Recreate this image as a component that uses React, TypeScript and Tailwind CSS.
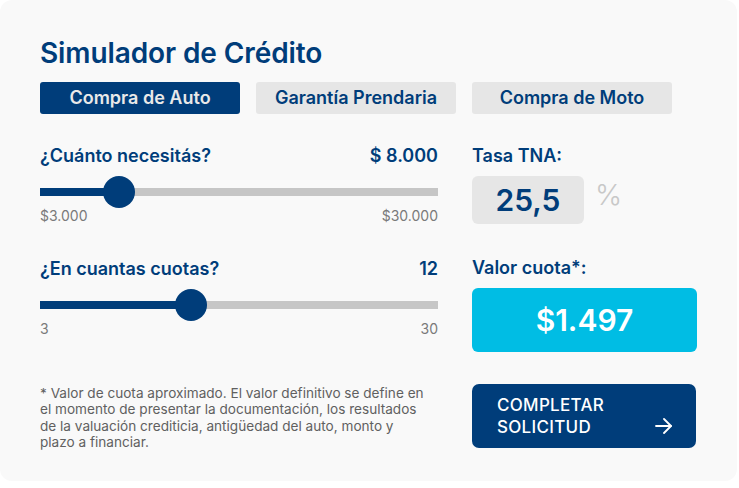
import React from "react";

function Slider({ pos, min, max }: { pos: number; min: string; max: string }) {
  return (
    <div>
      <div className="relative mt-2 flex h-8 items-center">
        <div className="flex h-2 w-full bg-[#c6c6c6]">
          <div className="h-full bg-[#003d7a]" style={{ width: `${pos}px` }} />
        </div>
        <div
          className="absolute top-0 h-8 w-8 rounded-full bg-[#003d7a]"
          style={{ left: `${pos - 16}px` }}
        />
      </div>
      <div className="-mt-[2px] flex justify-between text-[14px] leading-5 text-[#7a7a7a]">
        <span>{min}</span>
        <span>{max}</span>
      </div>
    </div>
  );
}

export default function App() {
  return (
    <div
      className="h-[488px] w-[739px] bg-white"
      style={{ fontFamily: "Inter, 'Noto Sans', sans-serif" }}
    >
      <div className="h-[481px] w-[737px] rounded-[12px] bg-[#f9f9f9] pl-[40px] pt-[35.5px]">
        <h1 className="text-[28px] font-semibold leading-[34px] tracking-[-0.1px] text-[#003d7a]">
          Simulador de Crédito
        </h1>
        <div className="mt-3 flex gap-4">
          <div className="flex h-8 w-[200px] items-center justify-center rounded-[3px] bg-[#003d7a] text-[18px] font-semibold text-[#e9e9e9]">
            Compra de Auto
          </div>
          <div className="flex h-8 w-[200px] items-center justify-center rounded-[3px] bg-[#e6e6e6] text-[18px] font-semibold text-[#003d7a]">
            Garantía Prendaria
          </div>
          <div className="flex h-8 w-[200px] items-center justify-center rounded-[3px] bg-[#e6e6e6] text-[18px] font-semibold text-[#003d7a]">
            Compra de Moto
          </div>
        </div>

        <div className="mt-[30.5px] flex gap-[34px]">
          <div className="w-[398px]">
            <div className="flex h-6 items-center justify-between text-[18px] font-semibold leading-6 text-[#003d7a]">
              <span>¿Cuánto necesitás?</span>
              <span>$ 8.000</span>
            </div>
            <Slider pos={79} min="$3.000" max="$30.000" />
            <div className="mt-[30.5px] flex h-6 items-center justify-between text-[18px] font-semibold leading-6 text-[#003d7a]">
              <span>¿En cuantas cuotas?</span>
              <span>12</span>
            </div>
            <Slider pos={151} min="3" max="30" />
          </div>

          <div className="w-[224px]">
            <div className="h-6 text-[18px] font-semibold leading-6 text-[#003d7a]">Tasa TNA:</div>
            <div className="mt-2 flex items-center">
              <div className="flex h-12 w-[112px] items-center justify-center rounded-[6px] bg-[#e6e6e6] text-[30px] font-semibold text-[#003d7a]">
                25,5
              </div>
              <span className="ml-[11px] -mt-[11px] text-[29px] font-light text-[#c8c8c8]">%</span>
            </div>
            <div className="mt-8 h-6 text-[18px] font-semibold leading-6 text-[#003d7a]">
              Valor cuota*:
            </div>
            <div className="mt-2 flex h-16 w-[225px] items-center justify-center rounded-[6px] bg-[#00bde4] text-[30px] font-semibold text-white">
              $1.497
            </div>
          </div>
        </div>

        <div className="mt-8 flex items-start gap-[34px]">
          <p className="w-[398px] whitespace-nowrap pt-[0.5px] text-[13.6px] leading-[16.5px] text-[#606060]">
            * Valor de cuota aproximado. El valor definitivo se define en
            <br />
            el momento de presentar la documentación, los resultados
            <br />
            de la valuación crediticia, antigüedad del auto, monto y
            <br />
            plazo a financiar.
          </p>
          <button className="flex h-16 w-[224px] items-center justify-between rounded-[7px] bg-[#003d7a] pl-[25px] pr-[24px] text-left text-[17px] font-medium leading-[22px] tracking-[0.3px] text-white">
            <span>
              COMPLETAR
              <br />
              SOLICITUD
            </span>
            <svg width="17" height="16" viewBox="0 0 17 16" className="mt-[20px]" fill="none" stroke="white" strokeWidth="1.8" strokeLinecap="round" strokeLinejoin="round">
              <path d="M1 8h15" />
              <path d="M9 1l7 7-7 7" />
            </svg>
          </button>
        </div>
      </div>
    </div>
  );
}
